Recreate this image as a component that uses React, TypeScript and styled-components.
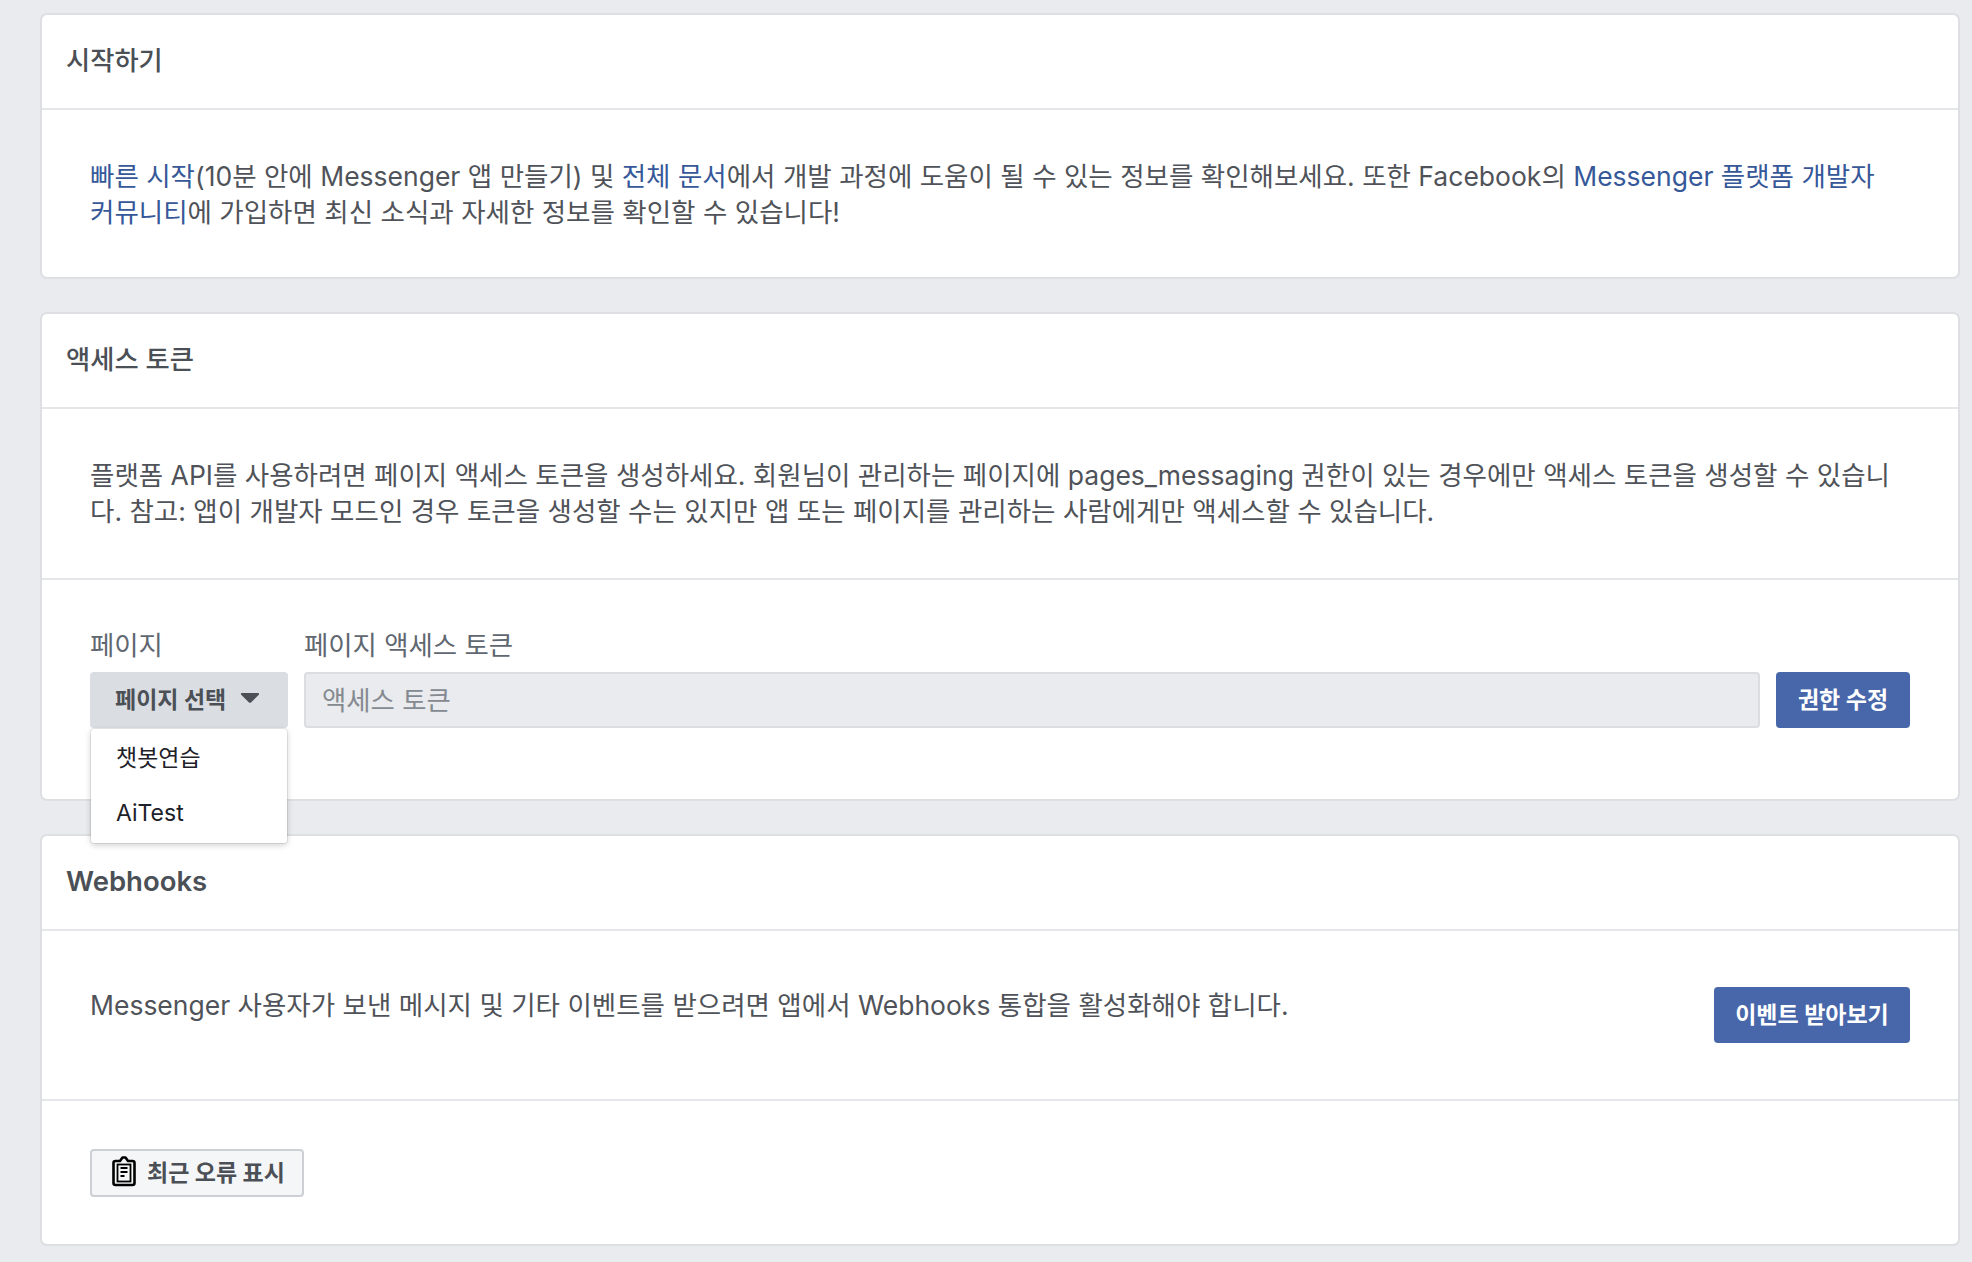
import React from "react";
import styled, { createGlobalStyle } from "styled-components";

const Global = createGlobalStyle`
  html, body { margin: 0; padding: 0; background: #e9ebee; }
  body { font-family: Inter, "Noto Sans CJK KR", "Noto Sans", sans-serif; color: #4b4f56; }
  * { box-sizing: border-box; }
`;

const Page = styled.div`
  display: flex;
  flex-direction: column;
  gap: 33px;
  width: 1972px;
  height: 1262px;
  padding: 13px 12px 0 40px;
  overflow: hidden;
`;

const Card = styled.section`
  background: #fff;
  border: 2px solid #dddfe2;
  border-radius: 7px;
`;

const CardTitle = styled.h2<{ $strong?: boolean }>`
  margin: 0;
  height: 95px;
  padding: 0 24px ${(p) => (p.$strong ? 4 : 7)}px;
  display: flex;
  align-items: center;
  font-size: ${(p) => (p.$strong ? "27.500px" : "26.300px")};
  font-weight: ${(p) => (p.$strong ? 600 : 500)};
  color: #4b4f56;
  border-bottom: 2px solid #e5e6e9;
`;

const Section = styled.div<{ $divided?: boolean; $top?: number; $bottom?: number }>`
  padding: ${(p) => p.$top ?? 49}px 48px ${(p) => p.$bottom ?? 49}px;
  border-bottom: ${(p) => (p.$divided ? "2px solid #e5e6e9" : "none")};
`;

const Prose = styled.p`
  margin: 0;
  font-size: 26.500px;
  line-height: 35.500px;
  color: #4f5359;
`;

const Link = styled.a`
  color: #365899;
  text-decoration: none;
`;

const FormRow = styled.div`
  display: flex;
  gap: 16px;
  align-items: flex-end;
`;

const Field = styled.div<{ $grow?: boolean }>`
  display: flex;
  flex-direction: column;
  gap: 10px;
  position: relative;
  flex: ${(p) => (p.$grow ? "1 1 auto" : "0 0 auto")};
`;

const FieldLabel = styled.label`
  font-size: 26.400px;
  line-height: 33px;
  color: #606770;
`;

const SelectButton = styled.button`
  width: 198px;
  height: 56px;
  border: 0;
  border-radius: 4px;
  background: #dadde1;
  color: #4b4f56;
  font: 700 23px Inter, "Noto Sans CJK KR", sans-serif;
  display: flex;
  align-items: center;
  gap: 14px;
  padding: 0 0 4px 25px;
`;

const TokenInput = styled.div`
  height: 56px;
  border: 2px solid #dadde1;
  border-radius: 4px;
  background: #e9ebee;
  color: #858a91;
  font-size: 26.400px;
  padding: 0 16px 4px;
  display: flex;
  align-items: center;
`;

const PrimaryButton = styled.button<{ $width: number }>`
  flex: 0 0 auto;
  width: ${(p) => p.$width}px;
  height: 56px;
  padding: 0 0 4px;
  border: 0;
  border-radius: 4px;
  background: #4867aa;
  color: #fff;
  font: 700 23px Inter, "Noto Sans CJK KR", sans-serif;
`;

const Menu = styled.ul`
  position: absolute;
  top: 100%;
  left: 1px;
  width: 196px;
  margin: 1px 0 0;
  padding: 0;
  list-style: none;
  background: #fff;
  border-radius: 3px;
  box-shadow: 0 0 0 1px rgba(0, 0, 0, 0.07), 0 2px 6px rgba(0, 0, 0, 0.2);
  z-index: 2;
`;

const MenuItem = styled.li`
  height: 57px;
  padding: 0 25px 4px;
  display: flex;
  align-items: center;
  font-size: 23px;
  color: #1d2129;
`;

const EventRow = styled.div`
  display: flex;
  justify-content: space-between;
  align-items: flex-start;
`;

const EventText = styled(Prose)`
  padding-top: 1px;
`;

const LogButton = styled.button`
  width: 214px;
  height: 48px;
  border: 2px solid #ccd0d5;
  border-radius: 4px;
  background: #f5f6f7;
  color: #4b4f56;
  font: 700 23px Inter, "Noto Sans CJK KR", sans-serif;
  display: flex;
  align-items: center;
  gap: 11px;
  padding: 0 0 4px 20px;
`;

const Caret = () => (
  <svg width="20" height="12" viewBox="0 0 20 12" aria-hidden="true">
    <path d="M2 1h16c1 0 1.400 1 .8 1.700L11 10.400c-.5.600-1.500.600-2 0L1.200 2.700C.6 2 1 1 2 1z" fill="#4b4f56" />
  </svg>
);

const ClipboardIcon = () => (
  <svg width="24" height="32" viewBox="0 0 24 32" fill="none" stroke="#000" aria-hidden="true">
    <path d="M8 6H3.500A2 2 0 0 0 1.500 8v20a2 2 0 0 0 2 2h17a2 2 0 0 0 2-2V8a2 2 0 0 0-2-2H16L13.500 2.500h-3z" strokeWidth="2.600" strokeLinejoin="round" />
    <rect x="5.500" y="9.500" width="13" height="17" strokeWidth="1.800" />
    <path d="M8.500 13h7M8.500 17h7M8.500 21h4" strokeWidth="1.800" />
  </svg>
);

export default function App() {
  return (
    <>
      <Global />
      <Page>
        <Card>
          <CardTitle>시작하기</CardTitle>
          <Section $top={49} $bottom={47}>
            <Prose>
              <Link>빠른 시작</Link>(10분 안에 Messenger 앱 만들기) 및 <Link>전체 문서</Link>에서 개발 과정에 도움이 될 수 있는 정보를 확인해보세요. 또한 Facebook의 <Link>Messenger 플랫폼 개발자</Link>
              <br />
              <Link>커뮤니티</Link>에 가입하면 최신 소식과 자세한 정보를 확인할 수 있습니다!
            </Prose>
          </Section>
        </Card>

        <Card>
          <CardTitle>액세스 토큰</CardTitle>
          <Section $divided>
            <Prose>
              플랫폼 API를 사용하려면 페이지 액세스 토큰을 생성하세요. 회원님이 관리하는 페이지에 pages_messaging 권한이 있는 경우에만 액세스 토큰을 생성할 수 있습니
              <br />
              다. 참고: 앱이 개발자 모드인 경우 토큰을 생성할 수는 있지만 앱 또는 페이지를 관리하는 사람에게만 액세스할 수 있습니다.
            </Prose>
          </Section>
          <Section $bottom={71}>
            <FormRow>
              <Field>
                <FieldLabel>페이지</FieldLabel>
                <SelectButton>
                  페이지 선택 <Caret />
                </SelectButton>
                <Menu>
                  <MenuItem>챗봇연습</MenuItem>
                  <MenuItem>AiTest</MenuItem>
                </Menu>
              </Field>
              <Field $grow>
                <FieldLabel>페이지 액세스 토큰</FieldLabel>
                <TokenInput>액세스 토큰</TokenInput>
              </Field>
              <PrimaryButton $width={134}>권한 수정</PrimaryButton>
            </FormRow>
          </Section>
        </Card>

        <Card>
          <CardTitle $strong>Webhooks</CardTitle>
          <Section $divided $top={56} $bottom={56}>
            <EventRow>
              <EventText>Messenger 사용자가 보낸 메시지 및 기타 이벤트를 받으려면 앱에서 Webhooks 통합을 활성화해야 합니다.</EventText>
              <PrimaryButton $width={196}>이벤트 받아보기</PrimaryButton>
            </EventRow>
          </Section>
          <Section $top={48} $bottom={47}>
            <LogButton>
              <ClipboardIcon />
              최근 오류 표시
            </LogButton>
          </Section>
        </Card>
      </Page>
    </>
  );
}
